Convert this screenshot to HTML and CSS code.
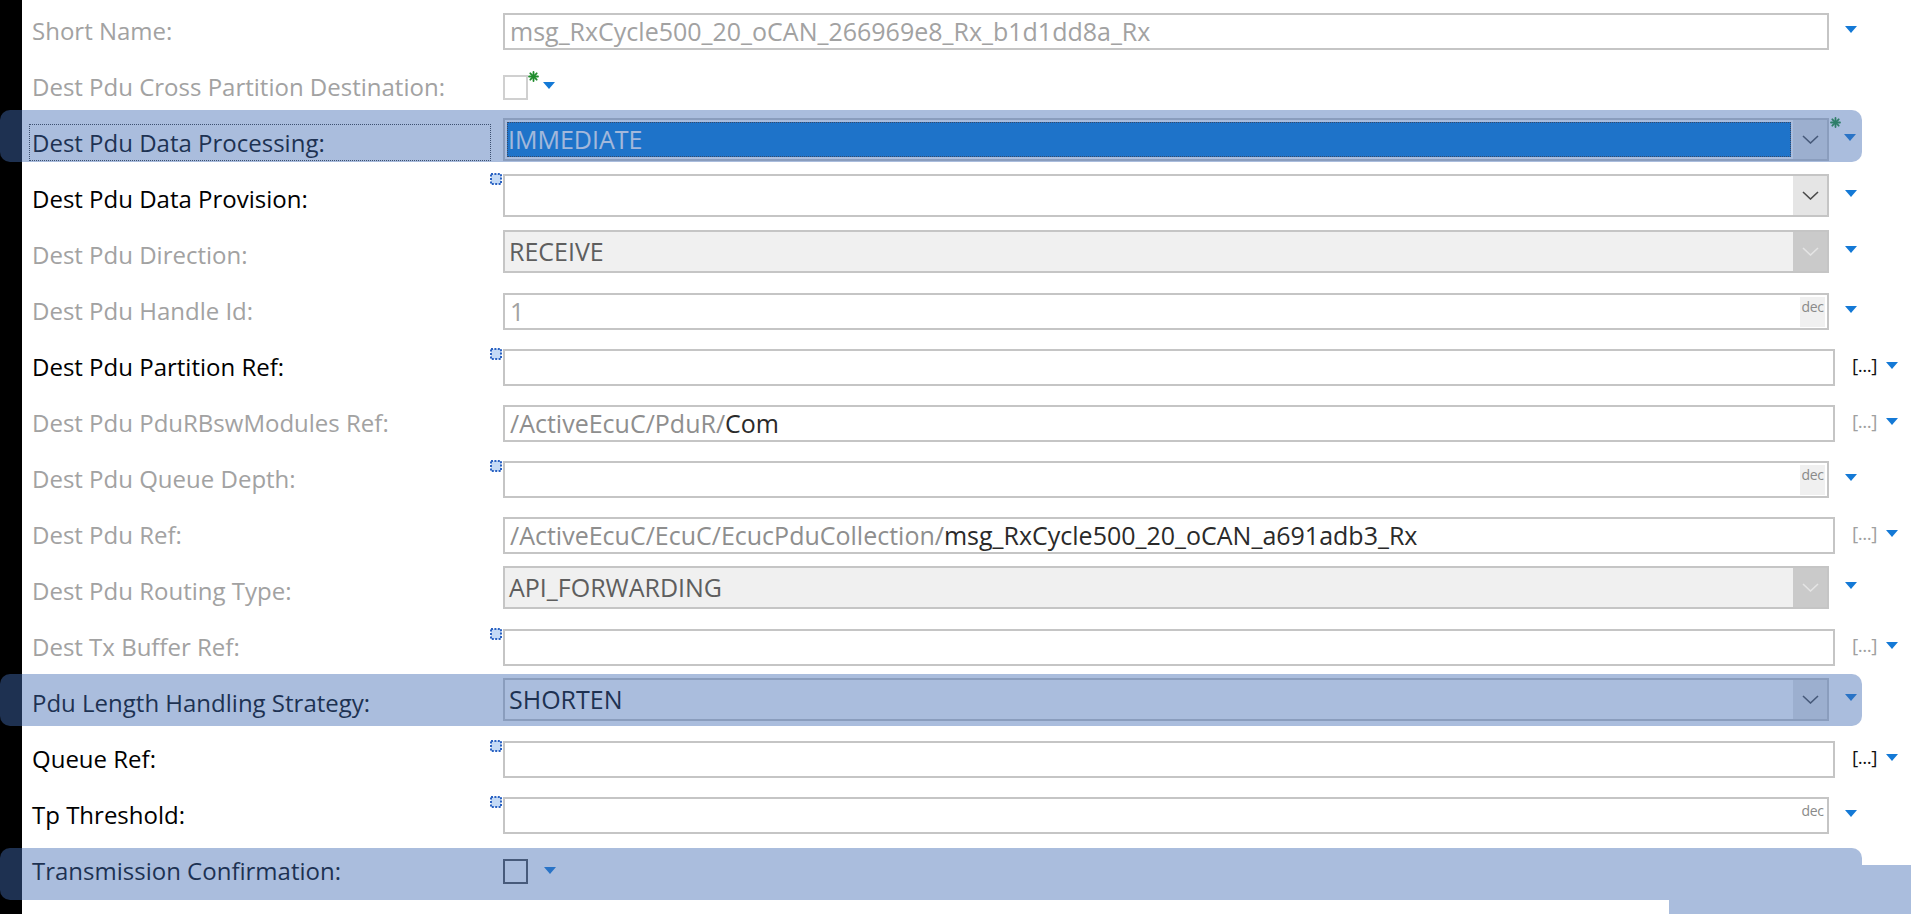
FILE: index.html
```html
<!DOCTYPE html>
<html>
<head>
<meta charset="utf-8">
<title>Dest Pdu</title>
<link rel="stylesheet" href="styles.css">
</head>
<body>
<div class="page">
  <div class="stripe"></div>
  <div class="form">

    <div class="row">
      <div class="label dis">Short Name:</div>
      <div class="mk"></div>
      <div class="field w-std"><span class="v-dis">msg_RxCycle500_20_oCAN_266969e8_Rx_b1d1dd8a_Rx</span></div>
      <span class="arrow"></span>
    </div>

    <div class="row">
      <div class="label dis">Dest Pdu Cross Partition Destination:</div>
      <div class="mk"></div>
      <span class="check"></span>
      <svg class="ast ast-cb" width="11" height="11" viewBox="0 0 11 11"><g stroke="#1f8c2c" stroke-width="1.8" stroke-linecap="round"><line x1="5.5" y1="1" x2="5.5" y2="10"/><line x1="1" y1="5.5" x2="10" y2="5.5"/><line x1="2.3" y1="2.3" x2="8.7" y2="8.7"/><line x1="8.7" y1="2.3" x2="2.3" y2="8.7"/></g></svg>
      <span class="arrow a-cb"></span>
    </div>

    <div class="row">
      <div class="label"><span class="focus">Dest Pdu Data Processing:</span></div>
      <div class="mk"></div>
      <div class="combo w-std">
        <div class="combo-text sel"><span>IMMEDIATE</span></div>
        <div class="combo-btn"><svg width="17" height="9" viewBox="0 0 17 9"><polyline points="1,1 8.5,8 16,1" fill="none" stroke="#4a4a4a" stroke-width="1.6"/></svg></div>
      </div>
      <svg class="ast ast-combo" width="11" height="11" viewBox="0 0 11 11"><g stroke="#1f8c2c" stroke-width="1.8" stroke-linecap="round"><line x1="5.5" y1="1" x2="5.5" y2="10"/><line x1="1" y1="5.5" x2="10" y2="5.5"/><line x1="2.3" y1="2.3" x2="8.7" y2="8.7"/><line x1="8.7" y1="2.3" x2="2.3" y2="8.7"/></g></svg>
      <span class="arrow a-combo a-after-ast"></span>
    </div>

    <div class="row">
      <div class="label">Dest Pdu Data Provision:</div>
      <div class="mk mk-combo"><svg width="12" height="12" viewBox="0 0 12 12"><rect x="1" y="1" width="10" height="10" fill="#c4daf6" stroke="#2a62c2" stroke-width="2" stroke-dasharray="2 1.4"/></svg></div>
      <div class="combo w-std">
        <div class="combo-text"></div>
        <div class="combo-btn"><svg width="17" height="9" viewBox="0 0 17 9"><polyline points="1,1 8.5,8 16,1" fill="none" stroke="#4a4a4a" stroke-width="1.6"/></svg></div>
      </div>
      <span class="arrow a-combo"></span>
    </div>

    <div class="row">
      <div class="label dis">Dest Pdu Direction:</div>
      <div class="mk"></div>
      <div class="combo w-std disabled">
        <div class="combo-text"><span class="v-combo-dis">RECEIVE</span></div>
        <div class="combo-btn"><svg width="17" height="9" viewBox="0 0 17 9"><polyline points="1,1 8.5,8 16,1" fill="none" stroke="#e4e4e4" stroke-width="1.6"/></svg></div>
      </div>
      <span class="arrow a-combo"></span>
    </div>

    <div class="row">
      <div class="label dis">Dest Pdu Handle Id:</div>
      <div class="mk"></div>
      <div class="field w-std"><span class="v-dis grow">1</span><span class="dec shaded">dec</span></div>
      <span class="arrow"></span>
    </div>

    <div class="row">
      <div class="label">Dest Pdu Partition Ref:</div>
      <div class="mk"><svg width="12" height="12" viewBox="0 0 12 12"><rect x="1" y="1" width="10" height="10" fill="#c4daf6" stroke="#2a62c2" stroke-width="2" stroke-dasharray="2 1.4"/></svg></div>
      <div class="field w-ref"></div>
      <span class="dots">[...]</span>
      <span class="arrow a-ref"></span>
    </div>

    <div class="row">
      <div class="label dis">Dest Pdu PduRBswModules Ref:</div>
      <div class="mk"></div>
      <div class="field w-ref"><span class="v-path">/ActiveEcuC/PduR/</span><span class="v-dark">Com</span></div>
      <span class="dots dots-dis">[...]</span>
      <span class="arrow a-ref"></span>
    </div>

    <div class="row">
      <div class="label dis">Dest Pdu Queue Depth:</div>
      <div class="mk"><svg width="12" height="12" viewBox="0 0 12 12"><rect x="1" y="1" width="10" height="10" fill="#c4daf6" stroke="#2a62c2" stroke-width="2" stroke-dasharray="2 1.4"/></svg></div>
      <div class="field w-std"><span class="grow"></span><span class="dec shaded">dec</span></div>
      <span class="arrow"></span>
    </div>

    <div class="row">
      <div class="label dis">Dest Pdu Ref:</div>
      <div class="mk"></div>
      <div class="field w-ref"><span class="v-path">/ActiveEcuC/EcuC/EcucPduCollection/</span><span class="v-dark">msg_RxCycle500_20_oCAN_a691adb3_Rx</span></div>
      <span class="dots dots-dis">[...]</span>
      <span class="arrow a-ref"></span>
    </div>

    <div class="row">
      <div class="label dis">Dest Pdu Routing Type:</div>
      <div class="mk"></div>
      <div class="combo w-std disabled">
        <div class="combo-text"><span class="v-combo-dis">API_FORWARDING</span></div>
        <div class="combo-btn"><svg width="17" height="9" viewBox="0 0 17 9"><polyline points="1,1 8.5,8 16,1" fill="none" stroke="#e4e4e4" stroke-width="1.6"/></svg></div>
      </div>
      <span class="arrow a-combo"></span>
    </div>

    <div class="row">
      <div class="label dis">Dest Tx Buffer Ref:</div>
      <div class="mk"><svg width="12" height="12" viewBox="0 0 12 12"><rect x="1" y="1" width="10" height="10" fill="#c4daf6" stroke="#2a62c2" stroke-width="2" stroke-dasharray="2 1.4"/></svg></div>
      <div class="field w-ref"></div>
      <span class="dots dots-dis">[...]</span>
      <span class="arrow a-ref"></span>
    </div>

    <div class="row">
      <div class="label">Pdu Length Handling Strategy:</div>
      <div class="mk"></div>
      <div class="combo w-std">
        <div class="combo-text"><span class="v-combo">SHORTEN</span></div>
        <div class="combo-btn"><svg width="17" height="9" viewBox="0 0 17 9"><polyline points="1,1 8.5,8 16,1" fill="none" stroke="#4a4a4a" stroke-width="1.6"/></svg></div>
      </div>
      <span class="arrow a-combo"></span>
    </div>

    <div class="row">
      <div class="label">Queue Ref:</div>
      <div class="mk"><svg width="12" height="12" viewBox="0 0 12 12"><rect x="1" y="1" width="10" height="10" fill="#c4daf6" stroke="#2a62c2" stroke-width="2" stroke-dasharray="2 1.4"/></svg></div>
      <div class="field w-ref"></div>
      <span class="dots">[...]</span>
      <span class="arrow a-ref"></span>
    </div>

    <div class="row">
      <div class="label">Tp Threshold:</div>
      <div class="mk"><svg width="12" height="12" viewBox="0 0 12 12"><rect x="1" y="1" width="10" height="10" fill="#c4daf6" stroke="#2a62c2" stroke-width="2" stroke-dasharray="2 1.4"/></svg></div>
      <div class="field w-std"><span class="grow"></span><span class="dec">dec</span></div>
      <span class="arrow"></span>
    </div>

    <div class="row">
      <div class="label">Transmission Confirmation:</div>
      <div class="mk"></div>
      <span class="check check-dark"></span>
      <span class="arrow a-cb2"></span>
    </div>

  </div>
</div>

<div class="band band-1"></div>
<div class="band band-2"></div>
<div class="band band-3"></div>
<div class="band band-4"></div>
<div class="band band-5"></div>
</body>
</html>
```

FILE: styles.css
```css
* { box-sizing: border-box; }

html, body {
  margin: 0;
  padding: 0;
  background: #ffffff;
}

body {
  position: relative;
  width: 1922px;
  height: 914px;
  overflow: hidden;
  font-family: "Open Sans", "Noto Sans", "Liberation Sans", sans-serif;
  font-size: 24px;
  color: #000000;
}

.page {
  display: flex;
  height: 914px;
}

.stripe {
  flex: none;
  width: 22px;
  background: #000000;
}

.form {
  display: flex;
  flex-direction: column;
  padding: 3px 0 0 10px;
}

.row {
  display: flex;
  align-items: center;
  height: 56px;
}

.label {
  flex: none;
  width: 458px;
  margin-bottom: 2px;
  white-space: nowrap;
}

.label.dis { color: #a2a2a2; }

.focus {
  display: flex;
  align-items: center;
  width: 462px;
  height: 37px;
  margin: 0 0 0 -3px;
  padding: 0 0 0 2px;
  border: 1px dotted #3a3a3a;
}

.mk {
  flex: none;
  width: 13px;
  height: 12px;
  align-self: flex-start;
  margin-top: 9px;
}

.mk-combo { margin-top: 2px; }

.mk svg { display: block; }

.field {
  flex: none;
  display: flex;
  align-items: center;
  height: 37px;
  padding: 0 2px 0 5px;
  border: 2px solid #c5c5c5;
  background: #ffffff;
  white-space: nowrap;
  font-size: 25px;
}

.w-std { width: 1326px; }
.w-ref { width: 1332px; }

.grow { flex: 1; }

.v-dis { color: #a2a2a2; }
.v-path { color: #8e8e8e; }
.v-dark { color: #2a2a2a; }

.dec {
  align-self: flex-start;
  width: 25px;
  height: 30px;
  margin-top: 2px;
  padding-top: 2px;
  font-size: 14px;
  line-height: 16px;
  color: #8a8a8a;
  text-align: center;
  letter-spacing: -0.4px;
}

.dec.shaded { background: #f0f0f0; }

.combo {
  flex: none;
  display: flex;
  height: 43px;
  margin-bottom: 8px;
  border: 2px solid #c5c5c5;
  background: #ffffff;
  font-size: 25px;
}

.combo-text {
  flex: 1;
  display: flex;
  align-items: center;
  padding-left: 4px;
  white-space: nowrap;
}

.combo-text.sel {
  margin: 2px;
  padding-left: 1px;
  background: #0079da;
  outline: 1px dotted #2c2c2c;
  outline-offset: -1px;
  color: #f2f6fc;
}

.combo-btn {
  flex: none;
  display: flex;
  align-items: center;
  justify-content: center;
  width: 34px;
  background: #e5e5e5;
}

.combo-btn svg { display: block; }

.combo.disabled { background: #f0f0f0; }
.combo.disabled .combo-btn { background: #cacaca; }

.v-combo-dis { color: #5e5e5e; }
.v-combo { color: #000000; }

.check {
  flex: none;
  width: 25px;
  height: 25px;
  border: 2px solid #d0d0d0;
  background: #ffffff;
}

.check-dark { border-color: #4c4c4c; }

.ast {
  flex: none;
  display: block;
  align-self: flex-start;
}

.ast-cb { margin-top: 12px; }
.ast-combo { margin: 2px 0 0 1px; }

.arrow {
  flex: none;
  width: 0;
  height: 0;
  margin-left: 16px;
  margin-bottom: 4px;
  border-left: 6px solid transparent;
  border-right: 6px solid transparent;
  border-top: 7px solid #1479d6;
}

.a-cb { margin-left: 4px; margin-bottom: 4px; }
.a-combo { margin-bottom: 11px; }
.a-after-ast { margin-left: 3px; }
.a-ref { margin-left: 9px; }
.a-cb2 { margin-left: 16px; margin-bottom: 2px; }

.dots {
  flex: none;
  margin-left: 17px;
  margin-bottom: 4px;
  font-size: 19px;
  letter-spacing: -0.5px;
  color: #111111;
}

.dots-dis { color: #a0a0a0; }

/* translucent highlight bands drawn over the form */
.band {
  position: absolute;
  left: 0;
  background: rgba(66, 108, 180, 0.45);
  pointer-events: none;
}

.band-1 { top: 110px; width: 1862px; height: 52px; border-radius: 10px; }
.band-2 { top: 674px; width: 1862px; height: 52px; border-radius: 10px; }
.band-3 { top: 848px; width: 1862px; height: 52px; border-radius: 10px 10px 0 10px; }
.band-4 { top: 865px; left: 1862px; width: 49px; height: 49px; }
.band-5 { top: 900px; left: 1669px; width: 193px; height: 14px; }
```
